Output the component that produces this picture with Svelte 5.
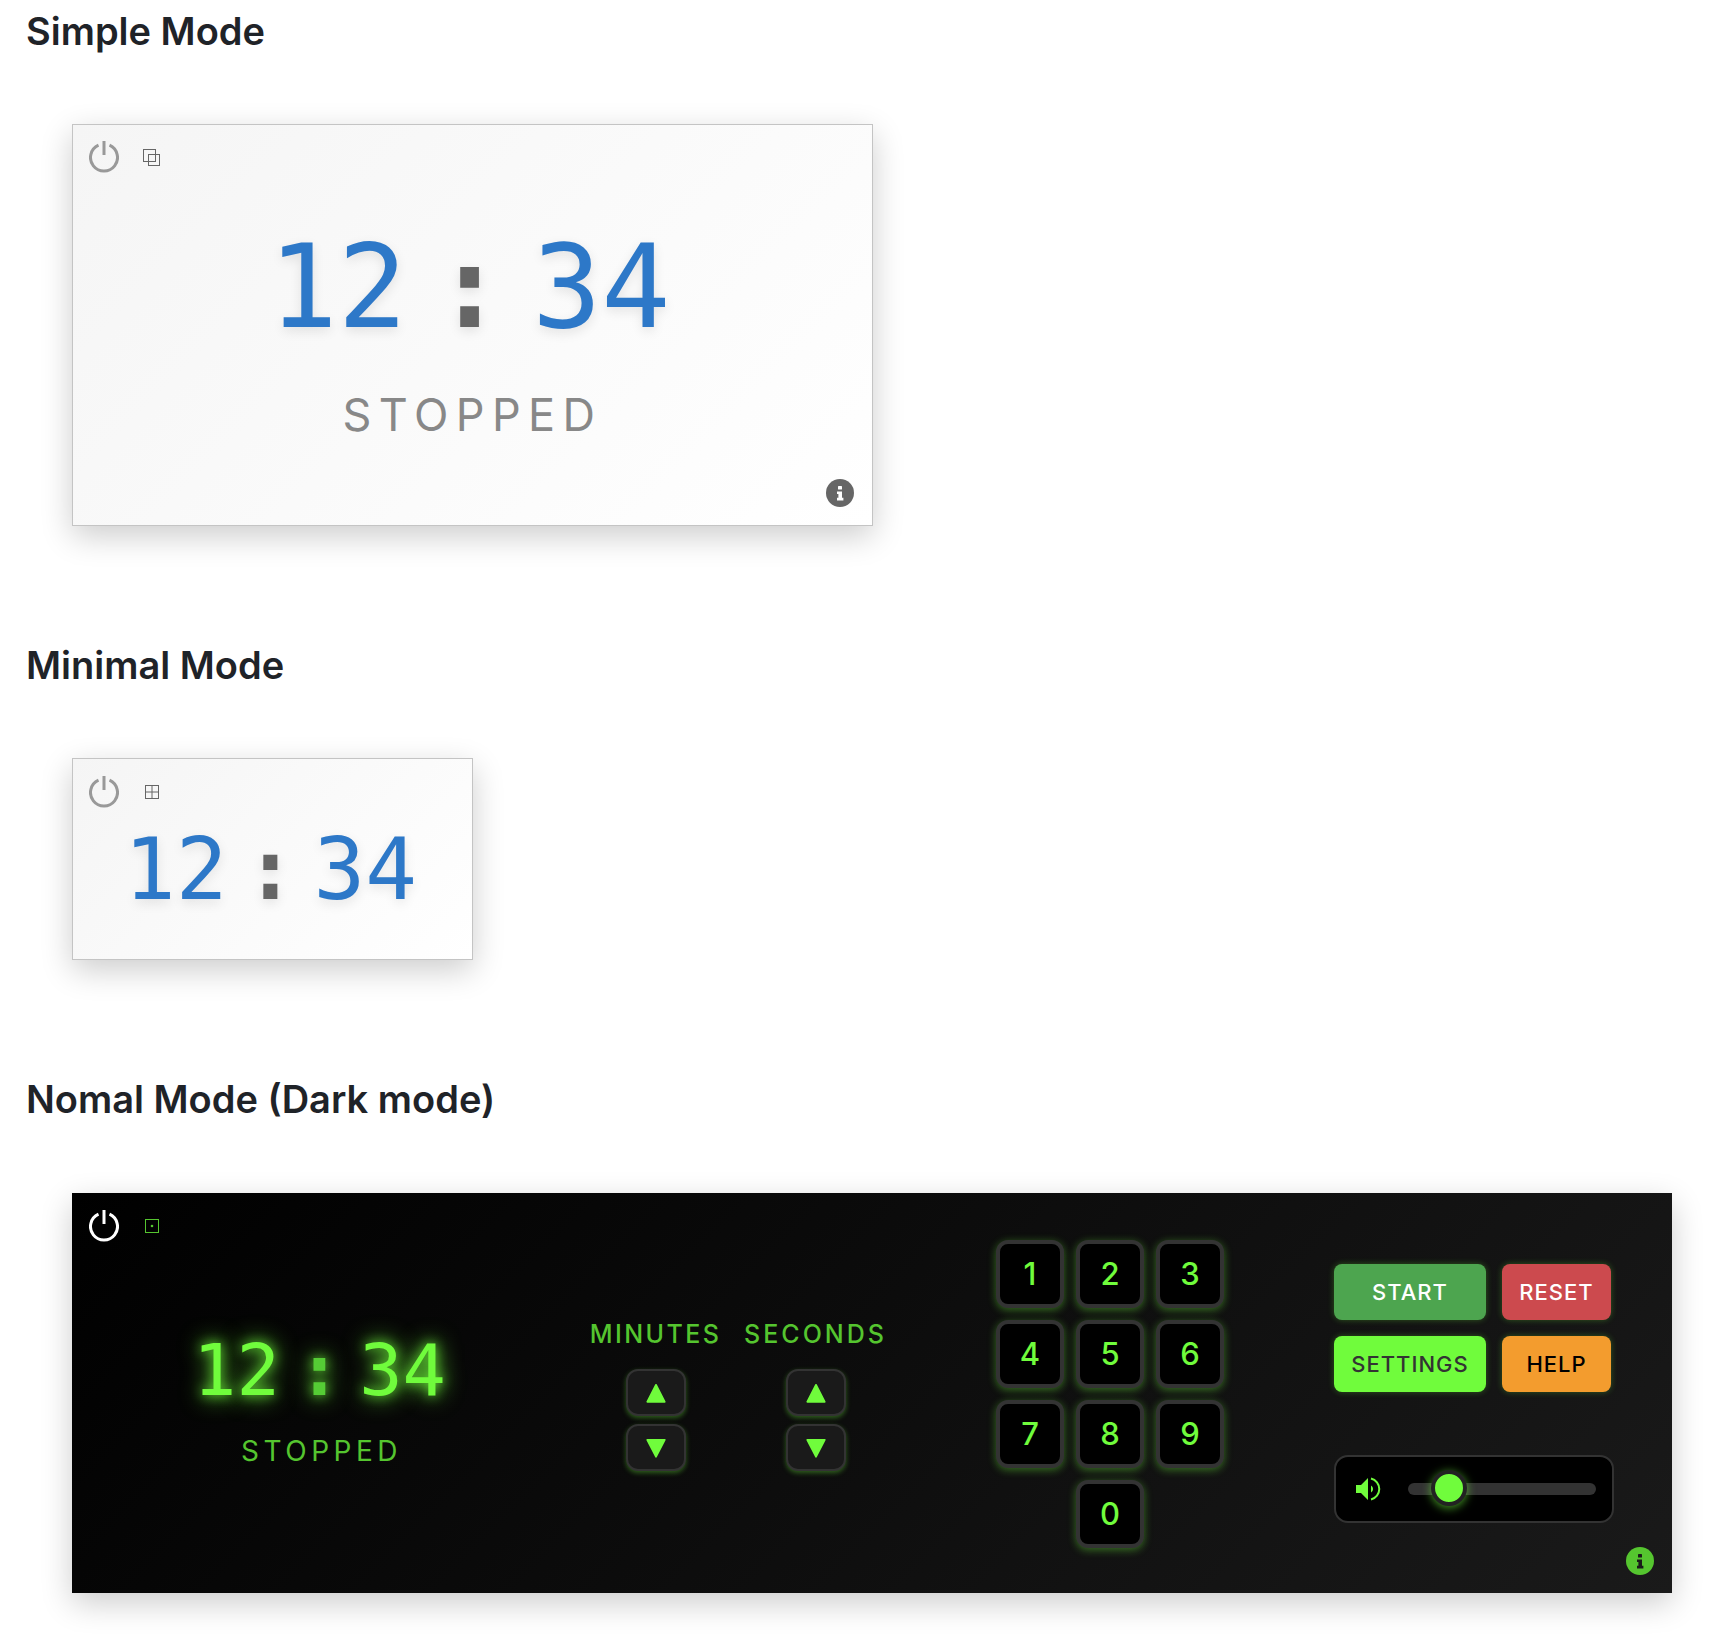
<script lang="ts">
  const keys = ["1", "2", "3", "4", "5", "6", "7", "8", "9", "0"];
  const units = ["MINUTES", "SECONDS"];
</script>

{#snippet power()}
  <svg class="power" viewBox="0 0 30 33" aria-hidden="true">
    <path d="M9.5 4.2a13.5 13.5 0 1 0 11 0" />
    <path d="M15 0v14" />
  </svg>
{/snippet}

{#snippet info()}
  <svg class="info" viewBox="0 0 28 28" aria-hidden="true">
    <circle class="info-bg" cx="14" cy="14" r="14" />
    <rect class="info-i" x="12" y="7" width="4" height="3.6" rx="0.6" />
    <path class="info-i" d="M11 12.4h5v6.4h1.4v2.6h-6.4v-2.6h1.4v-3.8h-1.4z" />
  </svg>
{/snippet}

{#snippet clock()}
  <div class="clock">
    <span>12</span><span class="colon">:</span><span>34</span>
  </div>
{/snippet}

<div class="page">
  <h2>Simple Mode</h2>
  <div class="panel light simple">
    {@render power()}
    <svg class="mode" viewBox="0 0 18 18" aria-hidden="true">
      <rect x="0.5" y="1.5" width="12" height="12" />
      <rect x="5.5" y="6.5" width="11" height="11" />
    </svg>
    {@render clock()}
    <div class="status">STOPPED</div>
    {@render info()}
  </div>

  <h2>Minimal Mode</h2>
  <div class="panel light minimal">
    {@render power()}
    <svg class="mode" viewBox="0 0 18 18" aria-hidden="true">
      <rect x="2.5" y="2.5" width="13" height="13" />
      <path d="M9 2.5v13M2.5 9h13" />
    </svg>
    {@render clock()}
  </div>

  <h2>Nomal Mode (Dark mode)</h2>
  <div class="panel dark">
    {@render power()}
    <svg class="mode" viewBox="0 0 18 18" aria-hidden="true">
      <rect x="2.5" y="2.5" width="13" height="13" />
      <circle cx="9" cy="9" r="1.3" />
    </svg>

    <div class="col-clock">
      {@render clock()}
      <div class="status">STOPPED</div>
    </div>

    <div class="col-time">
      {#each units as unit}
        <div class="unit">
          <div class="unit-label">{unit}</div>
          <button class="spin" aria-label="{unit} up">
            <svg viewBox="0 0 20 20"><path d="M10 2.5 L18 18 H2 Z" /></svg>
          </button>
          <button class="spin" aria-label="{unit} down">
            <svg viewBox="0 0 20 20"><path d="M10 18 L18 2.5 H2 Z" /></svg>
          </button>
        </div>
      {/each}
    </div>

    <div class="col-keys">
      <div class="keypad">
        {#each keys as key}
          <button class="key" class:zero={key === "0"}>{key}</button>
        {/each}
      </div>
    </div>

    <div class="col-actions">
      <div class="actions">
        <button class="act start">START</button>
        <button class="act reset">RESET</button>
        <button class="act settings">SETTINGS</button>
        <button class="act help">HELP</button>
      </div>
      <div class="volume">
        <svg class="speaker" viewBox="0 0 25 24" aria-hidden="true">
          <path class="cone" d="M0 8h5l7-7v22l-7-7H0z" />
          <path class="wave" d="M15 8.5a4 4 0 0 1 0 7z" />
          <path class="arc" d="M15 1.5a10.8 10.8 0 0 1 0 21" />
        </svg>
        <div class="track">
          <div class="thumb"></div>
        </div>
      </div>
    </div>
    {@render info()}
  </div>
</div>

<style>
  :global(body) {
    background: #fff;
    font-family: Inter, "Liberation Sans", sans-serif;
  }

  .page {
    padding: 8px 0 0 26px;
  }

  h2 {
    margin: 0 0 70px;
    font-size: 38px;
    line-height: 46px;
    font-weight: 600;
    color: #1f2328;
  }

  .panel {
    position: relative;
    box-sizing: border-box;
    margin: 0 0 116px 46px;
    box-shadow: 0 10px 30px rgba(0, 0, 0, 0.2);
  }

  .light {
    border: 1px solid #c4c4c4;
    background: linear-gradient(135deg, #f5f5f5, #fff);
    --power: #999;
    --mode: #666;
    --info: #666;
    --info-i: #fff;
  }

  .dark {
    background: linear-gradient(135deg, #000, #1a1a1a);
    --power: #fff;
    --mode: #55c52f;
    --info: #55c52f;
    --info-i: #1a1a1a;
  }

  .power {
    position: absolute;
    left: 16px;
    top: 16px;
    width: 30px;
    height: 33px;
    fill: none;
    stroke: var(--power);
    stroke-width: 3;
  }

  .mode {
    position: absolute;
    left: 70px;
    top: 23px;
    width: 18px;
    height: 18px;
    fill: none;
    stroke: var(--mode);
    stroke-width: 1;
  }

  .dark .power {
    left: 17px;
    top: 17px;
  }

  .dark .mode {
    left: 71px;
    top: 24px;
  }

  .dark .mode circle {
    fill: var(--mode);
    stroke: none;
  }

  .info {
    position: absolute;
    right: 18px;
    bottom: 18px;
    width: 28px;
    height: 28px;
  }

  .info-bg {
    fill: var(--info);
  }

  .info-i {
    fill: var(--info-i);
  }

  .clock {
    display: flex;
    justify-content: center;
    font-family: "DejaVu Sans Mono", monospace;
    color: #2d78c8;
    text-shadow: 0 4px 12px rgba(0, 0, 0, 0.1);
  }

  .colon {
    color: #666;
    font-weight: 700;
  }

  .status {
    font-weight: 400;
    color: #888;
    text-align: center;
  }

  .simple {
    width: 801px;
    height: 402px;
    padding-top: 92px;
  }

  .simple .clock {
    font-size: 115px;
    line-height: 140px;
    gap: 28px;
    padding-right: 6px;
  }

  .simple .status {
    margin-top: 31px;
    font-size: 45px;
    line-height: 54px;
    letter-spacing: 7.4px;
  }

  .minimal {
    width: 401px;
    height: 202px;
    padding-top: 55px;
  }

  .minimal .mode {
    top: 24px;
  }

  .minimal .power {
    top: 17px;
  }

  .minimal .clock {
    font-size: 86px;
    line-height: 110px;
    gap: 17px;
    padding-right: 4px;
  }

  .dark {
    display: grid;
    grid-template-columns: 498px 330px 420px 1fr;
    align-items: center;
    width: 1600px;
    height: 400px;
    margin-top: 71px;
    margin-bottom: 46px;
  }

  .dark .clock {
    font-size: 72px;
    line-height: 88px;
    gap: 18px;
    padding-right: 4px;
    color: #70fc3c;
    text-shadow:
      0 0 12px rgba(112, 252, 60, 0.8),
      0 0 24px #70fc3c;
  }

  .dark .colon {
    color: #55cc35;
  }

  .dark .status {
    margin-top: 20px;
    font-size: 28px;
    line-height: 34px;
    letter-spacing: 4.5px;
    color: #55c52f;
  }

  h2:has(+ .dark) {
    margin-bottom: 0;
  }

  .col-clock {
    padding-top: 8px;
    padding-left: 1px;
  }

  .col-time {
    display: flex;
    justify-content: center;
    gap: 13px;
    padding: 4px 0 0 1px;
  }

  .unit {
    display: flex;
    flex-direction: column;
    align-items: center;
    gap: 8px;
    width: 147px;
  }

  .unit-label {
    margin-bottom: 12px;
    font-size: 25px;
    line-height: 30px;
    font-weight: 500;
    letter-spacing: 3px;
    color: #55c52f;
    white-space: nowrap;
  }

  .unit:first-child .unit-label {
    letter-spacing: 2.4px;
  }

  button {
    font-family: inherit;
    padding: 0;
  }

  .spin {
    box-sizing: border-box;
    display: flex;
    align-items: center;
    justify-content: center;
    width: 60px;
    height: 47px;
    border: 2px solid #333;
    border-radius: 12px;
    background: #1a1a1a;
    box-shadow: 0 2px 5px rgba(112, 252, 60, 0.35);
  }

  .spin svg {
    width: 22px;
    height: 22px;
    fill: #70fc3c;
    stroke: #70fc3c;
    stroke-width: 1.5;
    stroke-linejoin: round;
  }

  .keypad {
    display: grid;
    grid-template-columns: repeat(3, 68px);
    grid-auto-rows: 68px;
    gap: 12px;
    justify-content: center;
    padding-top: 1px;
  }

  .key {
    box-sizing: border-box;
    border: 4px solid #333;
    border-radius: 12px;
    background: #000;
    color: #70fc3c;
    font-size: 31px;
    font-weight: 500;
    box-shadow: 0 2px 8px rgba(112, 252, 60, 0.4);
  }

  .zero {
    grid-column: 2;
  }

  .col-actions {
    padding-left: 14px;
  }

  .actions {
    display: grid;
    grid-template-columns: 152px 109px;
    grid-auto-rows: 56px;
    gap: 16px;
  }

  .act {
    border: none;
    border-radius: 8px;
    font-size: 22px;
    font-weight: 500;
    letter-spacing: 1px;
    box-shadow: 0 0 6px rgba(112, 252, 60, 0.3);
  }

  .start {
    background: #4da54f;
    color: #fff;
  }

  .reset {
    background: #cc4a4e;
    color: #fff;
  }

  .settings {
    background: #70fc3c;
    color: #333;
  }

  .help {
    background: #f39c2e;
    color: #000;
  }

  .volume {
    box-sizing: border-box;
    display: flex;
    align-items: center;
    width: 280px;
    height: 68px;
    margin-top: 63px;
    padding: 0 16px 0 20px;
    border: 2px solid #333;
    border-radius: 14px;
    background: #000;
  }

  .speaker {
    width: 25px;
    height: 24px;
    margin-right: 27px;
    flex: none;
  }

  .cone,
  .wave {
    fill: #70fc3c;
  }

  .arc {
    fill: none;
    stroke: #70fc3c;
    stroke-width: 2;
  }

  .track {
    position: relative;
    flex: 1;
    height: 12px;
    border-radius: 6px;
    background: #333;
  }

  .thumb {
    position: absolute;
    left: 23px;
    top: -13px;
    width: 28px;
    height: 28px;
    border: 4px solid #222;
    border-radius: 50%;
    background: #70fc3c;
    box-shadow: 0 2px 10px rgba(112, 252, 60, 0.6);
  }
</style>
